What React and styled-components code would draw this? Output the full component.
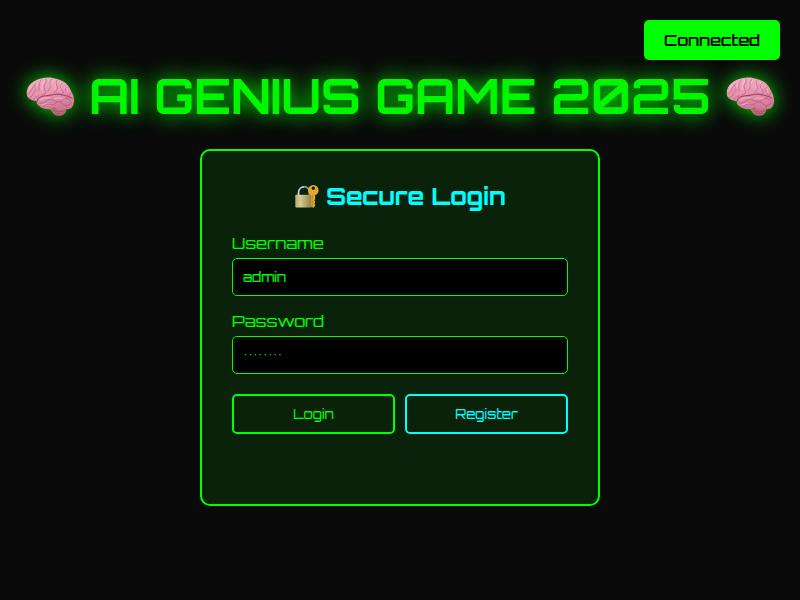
import React, { useState } from "react";
import styled, { createGlobalStyle, css } from "styled-components";

const GlobalStyle = createGlobalStyle`
  * { box-sizing: border-box; }
  body {
    margin: 0;
    background: #0a0a0a;
    color: #0f0;
    font-family: "Orbitron", "Inter", sans-serif;
    overflow: hidden;
  }
`;

const Page = styled.main`
  min-height: 100vh;
  padding: 66px 20px 20px;
`;

const Status = styled.div`
  position: fixed;
  top: 20px;
  right: 20px;
  z-index: 2;
  width: 136px;
  height: 40px;
  display: flex;
  align-items: center;
  justify-content: center;
  background: #0f0;
  color: #000;
  border-radius: 5px;
  font-size: 16px;
  line-height: 20px;
  font-weight: 500;
  -webkit-text-stroke: 0.2px;
`;

const Title = styled.h1`
  margin: 0 0 23px;
  height: 60px;
  display: flex;
  align-items: center;
  justify-content: center;
  gap: 14px;
  font-size: 48px;
  line-height: 60px;
  font-weight: 700;
  white-space: nowrap;
  color: #00f700;
  text-shadow: 0 0 20px #0f0;
`;

const BrainSvg = styled.svg`
  width: 50px;
  height: 50px;
  flex: none;
  filter: drop-shadow(0 0 10px rgba(0, 255, 0, 0.85));
`;

const Card = styled.section`
  width: 400px;
  height: 357px;
  margin: 0 auto;
  padding: 30px;
  border: 2px solid #0f0;
  border-radius: 10px;
  background: #092209;
`;

const Heading = styled.h2`
  margin: 0 0 22px;
  display: flex;
  align-items: center;
  justify-content: center;
  gap: 7px;
  font-size: 24px;
  line-height: 30px;
  font-weight: 700;
  color: #0ff;
  -webkit-text-stroke: 0.2px;
`;

const LockSvg = styled.svg`
  width: 25px;
  height: 26px;
  flex: none;
`;

const Field = styled.div`
  margin-bottom: 15px;
`;

const Label = styled.label`
  display: block;
  height: 20px;
  margin-bottom: 5px;
  font-size: 16px;
  line-height: 20px;
  -webkit-text-stroke: 0.15px;
`;

const Input = styled.input`
  display: block;
  width: 100%;
  height: 38px;
  padding: 10px;
  border: 1px solid #0f0;
  border-radius: 5px;
  background: #000;
  color: #0f0;
  font-family: inherit;
  font-size: 13.333px;
  outline: none;
  -webkit-text-stroke: 0.15px;
`;

const Actions = styled.div`
  display: flex;
  gap: 10px;
  margin-top: 20px;
`;

const Button = styled.button`
  flex: 1;
  height: 40px;
  padding: 0 0 1px;
  border: 2px solid currentColor;
  border-radius: 5px;
  background: transparent;
  color: #0f0;
  font-family: inherit;
  font-size: 13.333px;
  -webkit-text-stroke: 0.1px;
  ${(p) => p.$secondary && css`color: #0ff;`}
`;

const Brain = ({ id }) => (
  <BrainSvg viewBox="0 0 50 50" aria-hidden="true">
    <defs>
      <linearGradient id={id} x1="0.4" y1="0" x2="0.6" y2="1">
        <stop offset="0" stopColor="#f0afc2" />
        <stop offset=".5" stopColor="#e891ad" />
        <stop offset="1" stopColor="#cf7592" />
      </linearGradient>
    </defs>
    <path d="M24.5 37.5C27 40 28 44.5 34 44.8c5 0 7.5-3.5 7.5-8Z" fill="#bf6b7c" />
    <path d="M28 39.5q5 3 12 .3M30 42q4 1.800 8.500.2" fill="none" stroke="#93485b" strokeWidth=".6" />
    <path d="M1.800 23C1.300 17 5 12.500 10 9.800 15 6.500 25 5 32 8c7 1.500 12 6 14 12 3 4 3.800 10 2.200 14-1.200 3.600-4.200 4.500-7.200 4-4 1.700-9 .5-11.500-1.500-4 2.800-12 2.200-15.500-1.700-2.200-1.400-2.500-3-2-4.600C7.500 29.500 2 28 1.800 23Z" fill={`url(#${id})`} />
    <g fill="none" stroke="#ffd1dc" strokeWidth="1.300" strokeLinecap="round" opacity=".45">
      <path d="M4.500 18q2-4 5-6M10.500 19q0-5 4-8M17 18q0-5 3-9M24 16q1-4 4-7M30 18q0-5 2-8M36 19q1-4 0-7M42 22q1-4-1-6M15 29q5-3 10-2M29 28q5-2 10 0M17 34q4-2 8 0" />
    </g>
    <g fill="none" stroke="#a8557a" strokeWidth=".9" strokeLinecap="round" opacity=".65">
      <path d="M3 23q3-1 4-5t4-5M4 27q4-1 5-6l3-3M8 29.500q2-4 6-5M9 14q3 2 1 5M16 9q-3 3-2 7t-1 5M21 8q1 3-1 5t0 6-3 5M27 8q-3 3-2 6t-2 6M32 9q-2 3 0 6t-3 7M37 12q-3 4 0 7t-1 6M42 16q-3 3 0 6t-1 5M46 21q-3 3-1 7" />
      <path d="M14 32q5 1 7-2t8-.500 9-1 9 3M18 36q2-4 6-2.500t7-1.500 7 1 8-1M41 37q0-3 4-4" />
    </g>
    <path d="M12 30.500q1-5 7-5.500t10-1.500 11 1 7 3" fill="none" stroke="#9a486a" strokeWidth="1.100" strokeLinecap="round" />
  </BrainSvg>
);

const Lock = () => (
  <LockSvg viewBox="0 -0.7 25 26" aria-hidden="true">
    <defs>
      <linearGradient id="lockBody">
        <stop offset="0" stopColor="#b8b070" />
        <stop offset=".3" stopColor="#d9d294" />
        <stop offset="1" stopColor="#8a7a42" />
      </linearGradient>
    </defs>
    <path d="M4.600 12.500V9.500C4.600 1 15.600 1 15.600 9.500v3" fill="none" stroke="#8697ab" strokeWidth="2" />
    <path d="M4.300 12V9c.3-4 2.700-5.700 5.700-5.700" fill="none" stroke="#e0e9ef" strokeWidth=".9" />
    <rect x="1.300" y="11" width="16.900" height="12.700" rx=".8" fill="url(#lockBody)" />
    <path d="M2 14h16M2 16.500h16M2 19h16M2 21.500h16" stroke="#a39757" strokeWidth=".25" />
    <path fillRule="evenodd" d="M19.300 1.400a5.200 5.300 0 0 0-5.300 5.300c0 2.300 1.300 4 3.200 4.800v10.900l1.900 1.800 2-1.800v-1.500l-.8-.9.8-1v-1.300l-.8-1 .8-1v-4.200c2-.9 3.500-2.500 3.500-4.800a5.200 5.300 0 0 0-5.300-5.300Zm0 1.500a1.700 1.700 0 1 1 0 3.400 1.700 1.700 0 0 1 0-3.400Z" fill="#e6a52e" />
    <path d="M18.400 11v12" stroke="#b67b1c" strokeWidth=".7" />
  </LockSvg>
);

export default function App() {
  const [username, setUsername] = useState("admin");
  const [password, setPassword] = useState("password");
  return (
    <>
      <GlobalStyle />
      <Status>Connected</Status>
      <Page>
        <Title>
          <Brain id="brainLeft" />
          <span>AI GENIUS GAME 2025</span>
          <Brain id="brainRight" />
        </Title>
        <Card>
          <Heading>
            <Lock />
            <span>Secure Login</span>
          </Heading>
          <Field>
            <Label htmlFor="username">Username</Label>
            <Input id="username" value={username} onChange={(e) => setUsername(e.target.value)} />
          </Field>
          <Field>
            <Label htmlFor="password">Password</Label>
            <Input id="password" type="password" value={password} onChange={(e) => setPassword(e.target.value)} />
          </Field>
          <Actions>
            <Button type="button">Login</Button>
            <Button type="button" $secondary>Register</Button>
          </Actions>
        </Card>
      </Page>
    </>
  );
}
